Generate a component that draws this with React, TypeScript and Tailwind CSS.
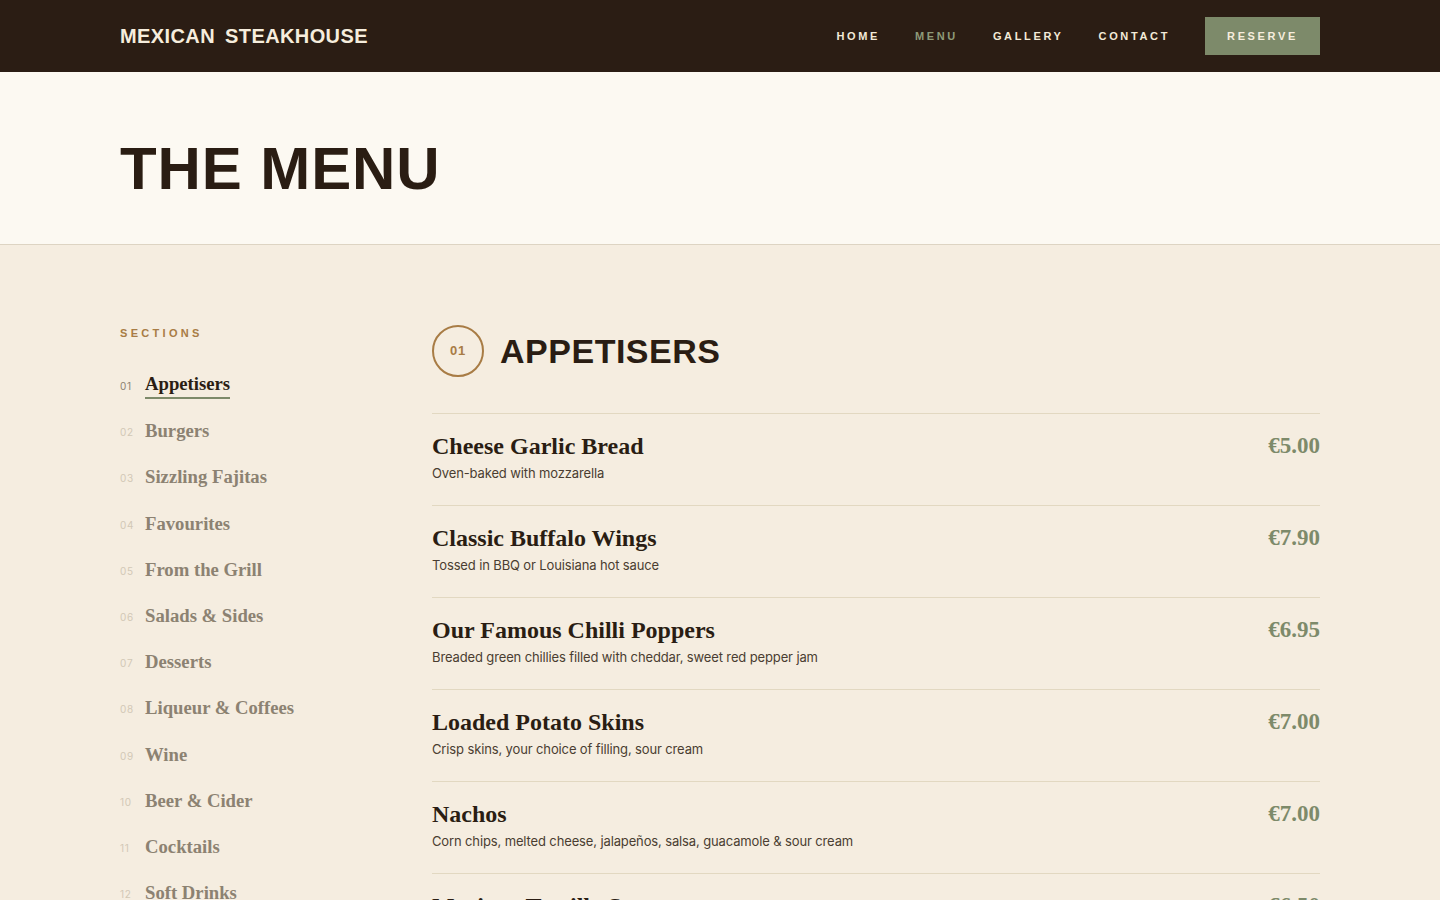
import React from "react";

const sections = [
  "Appetisers",
  "Burgers",
  "Sizzling Fajitas",
  "Favourites",
  "From the Grill",
  "Salads & Sides",
  "Desserts",
  "Liqueur & Coffees",
  "Wine",
  "Beer & Cider",
  "Cocktails",
  "Soft Drinks",
];

const items = [
  { name: "Cheese Garlic Bread", desc: "Oven-baked with mozzarella", price: "€5.00" },
  { name: "Classic Buffalo Wings", desc: "Tossed in BBQ or Louisiana hot sauce", price: "€7.90" },
  { name: "Our Famous Chilli Poppers", desc: "Breaded green chillies filled with cheddar, sweet red pepper jam", price: "€6.95" },
  { name: "Loaded Potato Skins", desc: "Crisp skins, your choice of filling, sour cream", price: "€7.00" },
  { name: "Nachos", desc: "Corn chips, melted cheese, jalapeños, salsa, guacamole & sour cream", price: "€7.00" },
  { name: "Mexican Tortilla Soup", desc: "Slow-simmered tomato broth, crispy tortilla strips, avocado", price: "€6.50" },
];

const sans = "font-['Liberation_Sans',Arial,sans-serif]";
const serif = "font-['Liberation_Serif','Times_New_Roman',serif]";
const body = "font-['Inter','Noto_Sans',sans-serif]";

export default function App() {
  return (
    <div className="min-h-screen bg-[#f5ede0] text-[#2a1d13]">
      <header className="h-[72px] bg-[#2b1d14] flex items-center justify-between px-[120px]">
        <div className={`${sans} font-bold text-[20px] tracking-[0.02em] text-[#f6eddd] flex gap-[10px]`}>
          <span>MEXICAN</span>
          <span>STEAKHOUSE</span>
        </div>
        <nav className={`${sans} flex items-center gap-[35px] text-[11px] font-bold tracking-[0.24em]`}>
          <a className="text-[#f3ead8]">HOME</a>
          <a className="text-[#8e9a78]">MENU</a>
          <a className="text-[#f3ead8]">GALLERY</a>
          <a className="text-[#f3ead8]">CONTACT</a>
          <a className="bg-[#7d8a6a] text-[#f6eddd] w-[115px] h-[38px] flex items-center justify-center">RESERVE</a>
        </nav>
      </header>

      <section className="bg-[#fcf9f2] border-b border-[#ddd4c3] px-[120px] pt-[67px] pb-[45px]">
        <h1 className={`${sans} font-bold text-[60px] leading-[60px] tracking-[0.015em] text-[#2a1d13]`}>THE MENU</h1>
      </section>

      <main className="grid grid-cols-[312px_1fr] px-[120px] pt-20">
        <aside>
          <div className={`${sans} font-bold text-[11px] leading-4 tracking-[0.3em] text-[#a87c45]`}>SECTIONS</div>
          <ul className="mt-[21px]">
            {sections.map((s, i) => {
              const active = i === 0;
              return (
                <li key={s} className="h-[46.2px] flex items-center">
                  <span
                    className={`${body} w-[25px] text-[10px] tracking-[0.08em] pt-[3px] ${
                      active ? "text-[#8c8272]" : "text-[#d2c8b6]"
                    }`}
                  >
                    {String(i + 1).padStart(2, "0")}
                  </span>
                  <span
                    className={`${serif} font-bold text-[18.7px] leading-[26px] ${
                      active ? "text-[#2a1d13] border-b-2 border-[#7d8a6a]" : "text-[#8c8272]"
                    }`}
                  >
                    {s}
                  </span>
                </li>
              );
            })}
          </ul>
        </aside>

        <div>
          <div className="flex items-center gap-4">
            <div className={`${sans} w-[52px] h-[52px] rounded-full border-2 border-[#a87c45] flex items-center justify-center text-[13px] font-bold text-[#a87c45] tracking-[0.05em]`}>
              01
            </div>
            <h2 className={`${sans} font-bold text-[34px] tracking-[0.015em] text-[#2a1d13]`}>APPETISERS</h2>
          </div>
          <div className="mt-9">
            {items.map((it) => (
              <div key={it.name} className="border-t border-[#e2d8c1] pt-[18px] pb-[22px] flex justify-between">
                <div>
                  <div className={`${serif} font-bold text-[24px] leading-[28px] text-[#2a1d13]`}>{it.name}</div>
                  <div className={`${body} text-[13px] leading-5 mt-[3px] tracking-[-0.01em] text-[#4a3d31]`}>{it.desc}</div>
                </div>
                <div className={`${serif} font-bold text-[23px] leading-[28px] text-[#7d8a6a]`}>{it.price}</div>
              </div>
            ))}
          </div>
        </div>
      </main>
    </div>
  );
}
